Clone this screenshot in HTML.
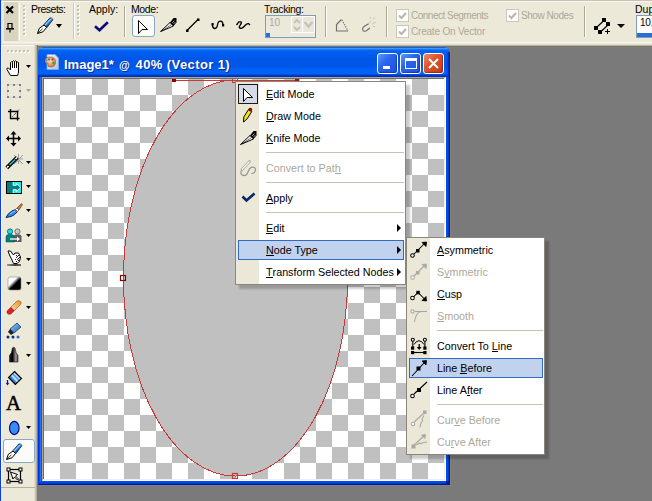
<!DOCTYPE html>
<html><head><meta charset="utf-8">
<style>
*{box-sizing:border-box;margin:0;padding:0}
html,body{width:652px;height:501px;overflow:hidden;background:#7a7a7a;font-family:"Liberation Sans",sans-serif;}
.a{position:absolute}
#tb{left:0;top:0;width:652px;height:47px;background:#ece9d8}
.lbl{position:absolute;font-size:10px;line-height:12px;color:#000;white-space:nowrap}
.sep{position:absolute;top:6px;width:2px;height:32px;border-left:1px solid #aca899;border-right:1px solid #fff}
.grip{position:absolute;width:3px;background-image:radial-gradient(circle at 1px 1px,#c6c2b2 1px,transparent 1px),radial-gradient(circle at 2px 2px,#fff 1px,transparent 1px);background-size:3px 4px}
.cb{position:absolute;width:13px;height:13px;border:1px solid #cac8bb;background:#fff}
.dis{color:#aca899}
#lt{left:0;top:45px;width:38px;height:456px;background:#ece9d8}
.dd{position:absolute;width:0;height:0;border-left:3px solid transparent;border-right:3px solid transparent;border-top:3px solid #000}
#win{left:38px;top:47px;width:412px;height:438px;}
#canvas{left:44px;top:79px;width:400px;height:400px;background:repeating-conic-gradient(#c0c0c0 0 25%,#fff 0 50%) 0 0/32px 32px;overflow:hidden}
.menu{position:absolute;background:#fff;border:1px solid #8a867a;box-shadow:4px 4px 2px rgba(0,0,0,0.2)}
.gut{position:absolute;left:0;top:0;width:23px;bottom:0;background:#ebe8d8}
.mi{position:absolute;left:0;right:0;height:22px;font-size:10.75px;line-height:22px;white-space:nowrap}
.mi .t{position:absolute;left:30px;top:0}
.msep{position:absolute;height:1px;background:#c5c2b2}
u{text-decoration:none;border-bottom:1px solid currentColor;line-height:9px;display:inline-block}
.arr{position:absolute;width:0;height:0;border-top:4px solid transparent;border-bottom:4px solid transparent;border-left:4px solid #000}
.hl{position:absolute;background:#c1d2ee;border:1px solid #316ac5}
.tbtn{width:21px;height:21px;border:1px solid #fff;border-radius:3px;background:linear-gradient(135deg,#5a9af8 0%,#2a66ec 40%,#1c50df 100%);box-shadow:inset -1px -1px 1px rgba(0,20,120,0.4)}
.cls{background:linear-gradient(135deg,#f08a6a 0%,#e0542c 40%,#c63d0e 100%)}
</style></head><body>

<!-- top toolbar -->
<div id="tb" class="a">
  <div class="a" style="left:0;top:0;width:652px;height:1px;background:#c6c3b4"></div>
  <div class="a" style="left:0;top:1px;width:652px;height:1px;background:#f9f8f0"></div>
  <div class="a" style="left:0;top:42px;width:652px;height:1px;background:#f7f6f0"></div>
  <div class="a" style="left:0;top:43px;width:652px;height:1px;background:#ebe8d9"></div>
  <div class="a" style="left:0;top:44px;width:652px;height:1px;background:#e2dfcc"></div>
  <div class="a" style="left:0;top:45px;width:652px;height:1px;background:#b8b4a2"></div>
  <div class="a" style="left:0;top:46px;width:652px;height:1px;background:#7a7560"></div>
  <!-- close/pin panel -->
  <div class="a" style="left:4px;top:2px;width:14px;height:39px;background:#d9d4bf"></div>
  <svg class="a" style="left:4px;top:4px" width="12" height="30" viewBox="4 4 12 30">
    <path d="M6.5 6.5 L13 13 M13 6.5 L6.5 13" stroke="#000" stroke-width="2.2"/>
    <path d="M7.5 23.5 H12.5 M8 23 V28.5 M12 23 V28.5" stroke="#000" stroke-width="1.2" fill="none"/>
    <path d="M6 28.8 H14" stroke="#000" stroke-width="1.6"/>
    <path d="M10 29.5 V32.5" stroke="#000" stroke-width="1.2"/>
  </svg>
  <div class="a" style="left:19px;top:3px;width:1px;height:37px;background:#fff"></div>
  <div class="grip" style="left:23px;top:5px;height:32px"></div>
  <div class="lbl" style="left:31px;top:3px;font-size:10.5px;letter-spacing:-0.5px">Presets:</div>
  <svg class="a" style="left:34px;top:15px" width="22" height="21" viewBox="34 15 22 21">
    <defs><linearGradient id="pb" gradientUnits="userSpaceOnUse" x1="47" y1="21" x2="50" y2="24"><stop offset="0" stop-color="#1a4a90"/><stop offset="0.3" stop-color="#9ad4ff"/><stop offset="0.55" stop-color="#3a8ae0"/><stop offset="1" stop-color="#0e2a6a"/></linearGradient></defs>
    <path d="M43.8 24.7 L49.8 18 Q51.5 17.3 53 19.5 L46.8 27.7 Z" fill="url(#pb)" stroke="#0a2a5a" stroke-width="0.8"/>
    <path d="M44 25 L46.5 27.5 L43 31.8 L37.5 33.5 L39.3 28.3 Z" fill="#fff" stroke="#000" stroke-width="1"/>
    <path d="M37.8 33.2 L42.5 28.8" stroke="#000" stroke-width="0.8"/>
  </svg>
  <div class="dd" style="left:56px;top:24px;border-width:4px 3px 0 3px"></div>
  <div class="a" style="left:73px;top:3px;width:1px;height:36px;background:#c9c6b6"></div>
  <div class="a" style="left:74px;top:3px;width:1px;height:36px;background:#fff"></div>
  <div class="grip" style="left:77px;top:5px;height:32px"></div>
  <div class="lbl" style="left:89px;top:3px;font-size:10.5px">Apply:</div>
  <svg class="a" style="left:90px;top:16px" width="22" height="18" viewBox="90 16 22 18">
    <path d="M95 26.3 L99.5 30.3 L107.8 22.2" fill="none" stroke="#0c0c78" stroke-width="2.6" stroke-linejoin="miter"/>
  </svg>
  <div class="a" style="left:124px;top:6px;width:1px;height:31px;background:#aca899"></div>
  <div class="a" style="left:125px;top:6px;width:1px;height:31px;background:#fff"></div>
  <div class="lbl" style="left:131px;top:3px;font-size:10.5px;letter-spacing:-0.4px">Mode:</div>
  <div class="a" style="left:132px;top:15px;width:23px;height:22px;border:1px solid #8ba7c6;border-radius:3px;background:#fbfbf8"></div>
  <svg class="a" style="left:137px;top:19px" width="13" height="15" viewBox="0 0 13 15">
    <path d="M1.5 1.5 V14.5 L5 10.5 H10.5 Z" fill="#fff" stroke="#000" stroke-width="1"/>
  </svg>
  <svg class="a" style="left:156px;top:14px" width="24" height="22" viewBox="156 14 24 22">
    <path d="M160.5 31.5 L170 22.5 L173.5 26 Z" fill="#fff" stroke="#000" stroke-width="1"/>
    <path d="M162 31 L171.5 24.5" stroke="#000" stroke-width="0.6"/>
    <path d="M170 22.5 L173.5 18 L176.5 18 L176.5 22.5 L173.5 26 Z" fill="#000"/>
    <path d="M172 23 L174.5 20.5 M173.5 24 L175.5 22" stroke="#ddd" stroke-width="0.7"/>
  </svg>
  <svg class="a" style="left:185px;top:18px" width="15" height="14" viewBox="0 0 15 14">
    <path d="M2 12.5 L13 1.5" stroke="#000" stroke-width="1.2"/>
    <rect x="1" y="11.5" width="2.5" height="2.5" fill="#000"/><rect x="12" y="0.5" width="2.5" height="2.5" fill="#000"/>
  </svg>
  <svg class="a" style="left:206px;top:16px" width="48" height="18" viewBox="206 16 48 18">
    <path d="M212.5 24.5 V26 Q213 28.5 215 28.5 Q217 28.5 217.5 25 Q218 21.2 220.5 21.2 Q222.8 21.2 223 24.5" fill="none" stroke="#000" stroke-width="1.3"/>
    <rect x="211.5" y="23" width="2.2" height="2.5" fill="#000"/><rect x="222" y="24" width="2.2" height="2.5" fill="#000"/>
    <path d="M236.5 25 L238.8 21.8 H241 Q242 22.5 240.5 24.5 L239.2 27 Q239.5 28.5 241.5 28.3 Q243 28 245 25.5 Q247 23.2 248.5 23.6 L250 25" fill="none" stroke="#000" stroke-width="1.3"/>
  </svg>
  <div class="lbl" style="left:264px;top:3px;font-size:10.5px;letter-spacing:-0.35px">Tracking:</div>
  <div class="a" style="left:265px;top:15px;width:51px;height:23px;border:1px solid #7f9db9;background:#ebe9dc"></div>
  <div class="lbl dis" style="left:269px;top:17px;font-size:10px;line-height:12px">10</div>
  <div class="a" style="left:291px;top:16px;width:24px;height:17px;background:#fff"></div>
  <div class="a" style="left:292px;top:17px;width:10px;height:15px;background:#e9e7dc"></div>
  <div class="a" style="left:303px;top:17px;width:11px;height:15px;background:#e9e7dc"></div>
  <svg class="a" style="left:292px;top:17px" width="23" height="15" viewBox="0 0 23 15">
    <path d="M2 6 L5 3 L8 6" fill="none" stroke="#c4c2b4" stroke-width="1.8"/>
    <path d="M2 10 L5 13 L8 10" fill="none" stroke="#c4c2b4" stroke-width="1.8"/>
    <path d="M12.5 5 L16.5 9.5 L20.5 5" fill="none" stroke="#c4c2b4" stroke-width="2.2"/>
  </svg>
  <div class="a" style="left:266px;top:33px;width:4px;height:4px;background:#2a6fd6"></div>
  <div class="a" style="left:325px;top:6px;width:1px;height:31px;background:#aca899"></div>
  <div class="a" style="left:326px;top:6px;width:1px;height:31px;background:#fff"></div>
  <svg class="a" style="left:330px;top:14px" width="50" height="22" viewBox="330 14 50 22">
    <path d="M341.5 19.5 L336.5 24.5 V31 H348" fill="none" stroke="#707070" stroke-width="1.2"/>
    <path d="M342 20 L348 31" fill="none" stroke="#707070" stroke-width="1.2" stroke-dasharray="1.2 1.2"/>
    <path d="M368.7 23.8 L364 26.5 Q362 28 362.7 30 Q363.8 31.8 366 31 L370 28" fill="none" stroke="#707070" stroke-width="1.2"/>
    <path d="M369 23 L371.5 21 M372 24 L376 22 M370 19 L371 17 M373 19 L375 17.5 M372.5 26 L375 27" stroke="#c8c6ba" stroke-width="1"/>
  </svg>
  <div class="a" style="left:386px;top:6px;width:1px;height:31px;background:#aca899"></div>
  <div class="a" style="left:387px;top:6px;width:1px;height:31px;background:#fff"></div>
  <div class="cb" style="left:396px;top:9px"></div>
  <svg class="a" style="left:398px;top:12px" width="9" height="8" viewBox="0 0 9 8"><path d="M1 3.5 L3.5 6 L8 1" fill="none" stroke="#b7b5a8" stroke-width="2"/></svg>
  <div class="lbl dis" style="left:411px;top:10px;letter-spacing:-0.5px">Connect Segments</div>
  <div class="cb" style="left:396px;top:25px"></div>
  <svg class="a" style="left:398px;top:28px" width="9" height="8" viewBox="0 0 9 8"><path d="M1 3.5 L3.5 6 L8 1" fill="none" stroke="#b7b5a8" stroke-width="2"/></svg>
  <div class="lbl dis" style="left:411px;top:26px;letter-spacing:-0.2px">Create On Vector</div>
  <div class="cb" style="left:506px;top:9px"></div>
  <svg class="a" style="left:508px;top:12px" width="9" height="8" viewBox="0 0 9 8"><path d="M1 3.5 L3.5 6 L8 1" fill="none" stroke="#b7b5a8" stroke-width="2"/></svg>
  <div class="lbl dis" style="left:521px;top:10px;letter-spacing:-0.45px">Show Nodes</div>
  <div class="a" style="left:584px;top:6px;width:1px;height:31px;background:#aca899"></div>
  <div class="a" style="left:585px;top:6px;width:1px;height:31px;background:#fff"></div>
  <svg class="a" style="left:592px;top:16px" width="20" height="20" viewBox="592 16 20 20">
    <path d="M597 27 L604 20.5 M601 31.5 L608 25" stroke="#000" stroke-width="1.1"/>
    <rect x="594" y="26" width="4" height="4" fill="#000"/><rect x="602" y="18" width="4" height="4" fill="#000"/>
    <rect x="606" y="22" width="4" height="4" fill="#000"/><rect x="598" y="30" width="4" height="4" fill="#000"/>
    <path d="M607.5 29 V34 M605 31.5 H610" stroke="#000" stroke-width="1"/>
  </svg>
  <div class="dd" style="left:617px;top:24px;border-width:4px 4px 0 4px"></div>
  <div class="lbl" style="left:635px;top:3px;font-size:10.5px">Dup</div>
  <div class="a" style="left:636px;top:15px;width:20px;height:23px;border:1px solid #7f9db9;background:#fff"></div>
  <div class="lbl" style="left:640px;top:17px;font-size:10px;letter-spacing:-0.2px">10.</div>
  <div class="a" style="left:637px;top:33px;width:20px;height:4px;background:#2a6fd6"></div>
</div>

<!-- left toolbar -->
<div id="lt" class="a">
  <div class="a" style="left:0;top:0;width:34px;height:1px;background:#fbfaf2"></div>
  <div class="a" style="left:1px;top:0;width:1px;height:442px;background:#fbfaf2"></div>
  <div class="a" style="left:34px;top:0;width:1px;height:456px;background:#dfdcc9"></div>
  <div class="a" style="left:35px;top:0;width:1px;height:456px;background:#c8c5b5"></div>
  <div class="a" style="left:36px;top:0;width:1px;height:456px;background:#b0ad9c"></div>
  <div class="a" style="left:37px;top:0;width:1px;height:456px;background:#7e7a65"></div>
  <div class="a" style="left:0;top:442px;width:35px;height:1px;background:#b5b2a2"></div>
  <div class="grip" style="left:7px;top:5px;width:24px;height:3px;background-size:4px 3px"></div>
  <svg class="a" style="left:0;top:0" width="36" height="441" viewBox="0 45 36 441">
    <!-- hand -->
    <path d="M10.5 75.5 L7 69.5 Q6.5 67.5 8.5 68 L10.5 70 V62.5 Q11.5 61 12.5 62.5 V61.5 Q13.5 60 14.5 61.5 V61.5 Q15.5 60 16.5 61.5 V62.5 Q17.5 61.5 18.5 62.5 V71 Q18.5 73.5 17.5 75.5 Z" fill="#fff" stroke="#000" stroke-width="1"/>
    <path d="M12.5 62.5 V68 M14.5 61.5 V68 M16.5 61.5 V68" stroke="#000" stroke-width="1"/>
    <path d="M26 65 h5 l-2.5 3z" fill="#000"/>
    <!-- selection -->
    <rect x="7.5" y="84.5" width="13" height="13" fill="none" stroke="#c0c0cc" stroke-width="1" stroke-dasharray="1 1"/>
    <g fill="#808080"><rect x="7" y="84" width="2" height="2"/><rect x="13" y="84" width="2" height="2"/><rect x="19" y="84" width="2" height="2"/>
    <rect x="7" y="90" width="2" height="2"/><rect x="19" y="90" width="2" height="2"/>
    <rect x="7" y="96" width="2" height="2"/><rect x="13" y="96" width="2" height="2"/><rect x="19" y="96" width="2" height="2"/></g>
    <path d="M26 89 h5 l-2.5 3z" fill="#aca899"/>
    <!-- crop -->
    <path d="M8 111.5 H18.5 M10.5 109 V119 M17.5 111 V120.5 M10 118.5 H19.5" fill="none" stroke="#000" stroke-width="1.4"/>
    <path d="M12.5 116.5 L16 113 M18 110.5 L19.5 109" stroke="#000" stroke-width="1" stroke-dasharray="1 1"/>
    <!-- move -->
    <path d="M13.5 133 v12 M8 138.5 h11" stroke="#000" stroke-width="1.5"/>
    <path d="M13.5 131 l-3 3.5 h6z M13.5 146.5 l-3 -3.5 h6z M6 138.5 l3 -3 v6z M21 138.5 l-3 -3 v6z" fill="#000"/>
    <!-- magic wand -->
    <path d="M14 155 L23 164 M23 155 L14 164 M18.5 154 V164 M13.5 159 H23" stroke="#a0a0a0" stroke-width="1"/>
    <path d="M15.5 157.5 L21.5 163.5 M21.5 157.5 L15.5 163.5" stroke="#c8c8c8" stroke-width="1"/>
    <path d="M6.8 167.8 L17.2 157.4" stroke="#000" stroke-width="4"/>
    <path d="M9.5 165 L15 159.5" stroke="#19d8e8" stroke-width="1.2"/>
    <path d="M7 167.5 L8.6 166 M15.5 159 L17 157.5" stroke="#fff" stroke-width="1.6"/>
    <path d="M26 161 h5 l-2.5 3z" fill="#000"/>
    <!-- teal box -->
    <rect x="6.5" y="181.5" width="15" height="12" fill="#10f4f8" stroke="#000" stroke-width="1"/>
    <path d="M7 182 H13 V185.3 H16.3 V183.3 L20.6 187.5 L16.3 191.7 V189.7 H13 V193 H7 Z" fill="#008080"/>
    <path d="M13.2 182 V185.3 H16.3 V183.3 L20.6 187.5 L16.3 191.7 V189.7 H13.2 V193" fill="none" stroke="#fff" stroke-width="0.9"/>
    <path d="M26 185 h5 l-2.5 3z" fill="#000"/>
    <!-- brush -->
    <path d="M6 217.5 Q8 213 12 211 L15.5 209.5 L17.5 211.5 Q15 215 11 216.5 Z" fill="#2a8ae8" stroke="#0a2870" stroke-width="1"/>
    <path d="M10 214 Q12 212.5 15 211" stroke="#9ad8ff" stroke-width="1"/>
    <path d="M15.5 209.5 L17 208 L19 210 L17.5 211.5 Z" fill="#fff" stroke="#333" stroke-width="0.6"/>
    <path d="M17 208 L21.5 203.5 L22.5 204.5 L19 210 Z" fill="#c87a2a" stroke="#5a3010" stroke-width="0.6"/>
    <path d="M26 209 h5 l-2.5 3z" fill="#000"/>
    <!-- clone people -->
    <circle cx="17.5" cy="231.5" r="2.6" fill="#c8c8c8" stroke="#555" stroke-width="0.8"/>
    <path d="M13.5 242 v-5 q0-2.5 2.5-2.5 h3 q2.5 0 2.5 2.5 v5z" fill="#5a5a5a"/>
    <circle cx="10" cy="231.5" r="2.6" fill="#10e0f0" stroke="#055" stroke-width="0.8"/>
    <path d="M6 242 v-5 q0-2.5 2.5-2.5 h3 q2.5 0 2.5 2.5 v5z" fill="#008080" stroke="#044" stroke-width="0.5"/>
    <path d="M10 239 h8.5" stroke="#fff" stroke-width="1.3"/><path d="M17 236.5 l3 2.5 l-3 2.5z" fill="#fff"/>
    <path d="M26 234 h5 l-2.5 3z" fill="#000"/>
    <!-- retouch hand -->
    <defs><linearGradient id="sh" x1="0" y1="0" x2="1" y2="0"><stop offset="0" stop-color="#9a9a9a"/><stop offset="0.6" stop-color="#404040"/><stop offset="1" stop-color="#6a6a6a"/></linearGradient></defs>
    <rect x="7" y="264" width="14" height="2" fill="url(#sh)"/>
    <path d="M8 251 L10.5 251 L13.5 255 L15 253 L18.5 253 L20.5 257 L19.5 261.5 L17 263.5 L13.5 263.5 L11.5 259 L9.5 255 Z" fill="#fff" stroke="#000" stroke-width="1"/>
    <g fill="#222"><rect x="16" y="255" width="1" height="1"/><rect x="18" y="255" width="1" height="1"/><rect x="17" y="256" width="1" height="1"/><rect x="19" y="257" width="1" height="1"/><rect x="16" y="257" width="1" height="1"/><rect x="18" y="258" width="1" height="1"/><rect x="17" y="259" width="1" height="1"/><rect x="15" y="259" width="1" height="1"/><rect x="18" y="260" width="1" height="1"/><rect x="16" y="261" width="1" height="1"/></g>
    <path d="M26 258 h5 l-2.5 3z" fill="#000"/>
    <defs><linearGradient id="dg" x1="0" y1="0" x2="1" y2="1"><stop offset="0.35" stop-color="#fff"/><stop offset="0.55" stop-color="#000"/></linearGradient>
    <linearGradient id="er" x1="0" y1="1" x2="1" y2="0"><stop offset="0.4" stop-color="#d8202a"/><stop offset="0.42" stop-color="#f3d08a"/><stop offset="1" stop-color="#f09020"/></linearGradient>
    <linearGradient id="mk" x1="0" y1="0" x2="1" y2="0"><stop offset="0" stop-color="#222"/><stop offset="0.35" stop-color="#000"/><stop offset="0.75" stop-color="#9a9a9a"/><stop offset="1" stop-color="#444"/></linearGradient>
    <linearGradient id="bk" x1="0" y1="0" x2="1" y2="1"><stop offset="0" stop-color="#9fd0f5"/><stop offset="1" stop-color="#1a5cb0"/></linearGradient>
    <linearGradient id="pn" x1="0" y1="0" x2="1" y2="0"><stop offset="0" stop-color="#1b4f9a"/><stop offset="0.5" stop-color="#6ab8f0"/><stop offset="1" stop-color="#1b4f9a"/></linearGradient></defs>
    <!-- dodge -->
    <rect x="8" y="277" width="13" height="13" rx="2" fill="url(#dg)" stroke="#888" stroke-width="0.6"/>
    <path d="M26 282 h5 l-2.5 3z" fill="#000"/>
    <!-- eraser -->
    <path d="M7 311 L17 301 Q19 300 21 302 L21 304 L11 314 Q8 315 7 313 Z" fill="url(#er)" stroke="#a04020" stroke-width="0.6"/>
    <path d="M26 306 h5 l-2.5 3z" fill="#000"/>
    <!-- blue marker dots -->
    <path d="M10 329 L17 323 L21 327 L14 333 Z" fill="url(#bk)" stroke="#143d7a" stroke-width="0.8"/>
    <path d="M10 329 L14 333 L11 335 L8 332 Z" fill="#222"/>
    <circle cx="8" cy="337" r="1.5" fill="#0a2a7a"/><circle cx="13" cy="337" r="1.5" fill="#0a2a7a"/><circle cx="18" cy="337" r="1.5" fill="#2a6ad0"/>
    <!-- black marker -->
    <path d="M9.5 362 V355.5 L11.5 352.5 L12.5 348 Q13.7 346.5 15 348 L16 352.5 L18 355.5 V362 Z" fill="url(#mk)" stroke="#111" stroke-width="0.6"/>
    <path d="M26 354 h5 l-2.5 3z" fill="#000"/>
    <!-- bucket -->
    <defs><linearGradient id="bk2" gradientUnits="userSpaceOnUse" x1="11" y1="381" x2="18.5" y2="374"><stop offset="0" stop-color="#0a3a8a"/><stop offset="0.3" stop-color="#4a9ae8"/><stop offset="0.45" stop-color="#e8f6ff"/><stop offset="0.6" stop-color="#3a8ae0"/><stop offset="0.75" stop-color="#bfe4ff"/><stop offset="1" stop-color="#0a3a8a"/></linearGradient></defs>
    <path d="M14.5 371.5 L21.5 378.5 L15.3 384.5 L8.5 377.5 Z" fill="url(#bk2)" stroke="#000" stroke-width="1.1"/>
    <path d="M7.5 380 V384" stroke="#1010a0" stroke-width="1.3"/><path d="M5.8 383 h3.4 l-1.7 2.5z" fill="#1010a0"/>
    <!-- A -->
    <text x="6" y="409.6" font-family="Liberation Serif" font-size="20.5" fill="#000" stroke="#000" stroke-width="0.5" textLength="15" lengthAdjust="spacingAndGlyphs">A</text>
    <!-- ellipse -->
    <ellipse cx="14.3" cy="428" rx="4.8" ry="6.6" fill="#3a8df0" stroke="#00007a" stroke-width="1.1"/>
    <path d="M26 426 h5 l-2.5 3z" fill="#000"/>
  </svg>
  <div class="a" style="left:3px;top:394px;width:32px;height:24px;border:1px solid #8ba7c6;border-radius:3px;background:#fbfbf8"></div>
  <svg class="a" style="left:0;top:394px" width="36" height="47" viewBox="0 439 36 47">
    <g transform="translate(-31 426)"><defs><linearGradient id="pb2" gradientUnits="userSpaceOnUse" x1="47" y1="21" x2="50" y2="24"><stop offset="0" stop-color="#1a4a90"/><stop offset="0.3" stop-color="#9ad4ff"/><stop offset="0.55" stop-color="#3a8ae0"/><stop offset="1" stop-color="#0e2a6a"/></linearGradient></defs>
    <path d="M43.8 24.7 L49.8 18 Q51.5 17.3 53 19.5 L46.8 27.7 Z" fill="url(#pb2)" stroke="#0a2a5a" stroke-width="0.8"/>
    <path d="M44 25 L46.5 27.5 L43 31.8 L37.5 33.5 L39.3 28.3 Z" fill="#fff" stroke="#000" stroke-width="1"/>
    <path d="M37.8 33.2 L42.5 28.8" stroke="#000" stroke-width="0.8"/></g>
    <!-- object selector -->
    <rect x="8.5" y="469.5" width="12" height="12" fill="none" stroke="#000" stroke-width="1.2"/>
    <g fill="#fff" stroke="#000" stroke-width="1"><rect x="7" y="468" width="3" height="3"/><rect x="19" y="468" width="3" height="3"/>
    <rect x="7" y="480" width="3" height="3"/><rect x="19" y="480" width="3" height="3"/></g>
    <path d="M10.5 472 L17.5 474.5 L15.5 476 L18.5 479 L17.5 480 L14.5 477 L13 479 Z" fill="#fff" stroke="#000" stroke-width="1"/>
  </svg>
</div>

<div class="a" style="left:0;top:0;width:1px;height:501px;background:#0a3ce0"></div>

<!-- document window -->
<div id="win" class="a">
  <div class="a" style="left:0;top:0;width:412px;height:30px;border-radius:6px 6px 0 0;background:linear-gradient(#0a64f5 0,#0a64f5 1px,#3c96ff 1px,#3c96ff 2px,#1a78ff 2px,#1a78ff 3px,#0a66f5 3px,#0060f0 5px,#0056e6 12px,#0056e6 19px,#0062f5 23px,#0064f5 27px,#0050e0 27px,#0050e0 28px,#0038d0 28px,#0038d0 29px,#0030c0 29px)"></div>
  <div class="a" style="left:0;top:30px;width:4px;height:408px;background:linear-gradient(90deg,#0030e0 0,#0030e0 1px,#0848e8 1px,#0848e8 2px,#2070f8 2px,#2070f8 3px,#0858e8 3px)"></div>
  <div class="a" style="left:408px;top:5px;width:4px;height:25px;background:linear-gradient(90deg,rgba(0,80,240,0) 0,rgba(0,70,230,0.3) 1px,rgba(0,50,190,0.7) 2px,#0020a8 3px)"></div>
  <div class="a" style="left:408px;top:30px;width:4px;height:408px;background:linear-gradient(90deg,#0050f0 0,#0050f0 1px,#0048e8 1px,#0048e8 2px,#0038c8 2px,#0038c8 3px,#0018a0 3px)"></div>
  <div class="a" style="left:0;top:434px;width:412px;height:4px;background:linear-gradient(#0050f0 0,#0050f0 1px,#0048e8 1px,#0048e8 2px,#0038c8 2px,#0038c8 3px,#0018a0 3px)"></div>
  <div class="a" style="left:408px;top:434px;width:4px;height:4px;background:#0018a0"></div>
  <div class="a" style="left:4px;top:30px;width:404px;height:404px;background:#fff;border-top:1px solid #aca68e;border-left:1px solid #aca68e;border-right:1px solid #fff;border-bottom:1px solid #fff"></div>
  <div class="a" style="left:5px;top:31px;width:1px;height:401px;background:#716f64"></div>
  <div class="a" style="left:5px;top:31px;width:401px;height:1px;background:#716f64"></div>
  <div class="a" style="left:406px;top:31px;width:1px;height:401px;background:#f0efe6"></div>
  <div class="a" style="left:5px;top:432px;width:402px;height:1px;background:#f0efe6"></div>
</div>
<div class="a" style="left:450px;top:49px;width:1px;height:437px;background:#84816e"></div>
<div class="a" style="left:38px;top:485px;width:413px;height:1px;background:#84816e"></div>
<div id="canvas" class="a"></div>

<!-- title contents -->
<svg class="a" style="left:43px;top:53px" width="18" height="18" viewBox="0 0 18 18">
  <defs><linearGradient id="pg" x1="0" y1="0" x2="1" y2="1"><stop offset="0" stop-color="#f4f8ff"/><stop offset="1" stop-color="#a9c2ea"/></linearGradient>
  <radialGradient id="pal" cx="0.45" cy="0.4" r="0.6"><stop offset="0" stop-color="#f8e0b0"/><stop offset="1" stop-color="#d07a3a"/></radialGradient></defs>
  <path d="M4 1.5 h8 l3.5 3.5 v11.5 h-11.5z" fill="url(#pg)" stroke="#8aa6d8" stroke-width="0.8"/>
  <path d="M2 8 Q2 4 7 4 Q12.5 4 12.5 9 Q12.5 14 7.5 14 Q4 14 5 11 Q5.5 9.5 4 10 Q2 11 2 8z" fill="url(#pal)" stroke="#9a5020" stroke-width="0.6"/>
  <circle cx="6" cy="6.5" r="1.1" fill="#3a6ad0"/><circle cx="9.5" cy="6.5" r="1.1" fill="#d83020"/><circle cx="10.5" cy="10" r="1.2" fill="#2aa040"/><circle cx="3.5" cy="7.5" r="0.9" fill="#4a8ae0"/>
</svg>
<div class="a" style="left:64px;top:57px;font-size:13px;line-height:16px;font-weight:bold;color:#fff;white-space:nowrap;text-shadow:1px 1px 0 #0a2a9a">Image1*<span style="font-size:11px;margin-left:5px;font-weight:bold">@</span><span style="margin-left:6px;letter-spacing:0.4px">40% (Vector 1)</span></div>
<div class="a tbtn" style="left:377px;top:53px"><div class="a" style="left:5px;top:12px;width:7px;height:3px;background:#fff"></div></div>
<div class="a tbtn" style="left:400px;top:53px"><div class="a" style="left:4px;top:4px;width:12px;height:11px;border:1px solid #fff;border-top-width:3px"></div></div>
<div class="a tbtn cls" style="left:423px;top:53px"><svg class="a" style="left:4px;top:4px" width="11" height="11"><path d="M1 1 L10 10 M10 1 L1 10" stroke="#fff" stroke-width="2"/></svg></div>

<!-- ellipse -->
<svg class="a" style="left:44px;top:79px" width="400" height="400" viewBox="44 79 400 400">
  <ellipse cx="235.5" cy="278" rx="112" ry="198" fill="#c0c0c0" stroke="#c83a3a" stroke-width="1" shape-rendering="crispEdges"/>
  <path d="M176 80.5 H232 M238 80.5 H295" stroke="#c53a3a" stroke-width="1"/>
  <rect x="172" y="79" width="4" height="3" fill="#8b0000"/>
  <rect x="295" y="79" width="4" height="3" fill="#a01010"/>
  <rect x="232.5" y="77.5" width="5" height="5" fill="none" stroke="#c53a3a" stroke-width="1"/>
  <rect x="120.5" y="275.5" width="5" height="5" fill="none" stroke="#8b0000" stroke-width="1.2"/>
  <rect x="232.5" y="473.5" width="5" height="5" fill="none" stroke="#c53a3a" stroke-width="1.2"/>
</svg>

<!-- context menu -->
<div class="menu" style="left:235px;top:81px;width:171px;height:204px">
  <div class="gut" style="width:23px"></div>
  <div class="a" style="left:2px;top:2px;width:20px;height:20px;border:1px solid #1c1c1c;background:#d4dae8"></div>
  <svg class="a" style="left:0;top:0" width="24" height="202" viewBox="236 82 24 202">
    <path d="M243.5 88.5 V101.5 L247 97.5 H252.5 Z" fill="#fff" stroke="#000" stroke-width="1"/>
    <path d="M243.5 122 L243.8 117 L248.5 109.5 L251.8 111.5 L247 119 Z" fill="#f4e41c" stroke="#000" stroke-width="1"/>
    <circle cx="250.3" cy="109.6" r="1.9" fill="#8a0a0a"/>
    <path d="M240.5 144.5 L250 135.5 L253.5 139 Z" fill="#fff" stroke="#000" stroke-width="1"/>
    <path d="M242 144 L251.5 137.5" stroke="#000" stroke-width="0.6"/>
    <path d="M250 135.5 L253.5 131 L256.5 131 L256.5 135.5 L253.5 139 Z" fill="#000"/>
    <path d="M252 136 L254.5 133.5 M253.5 137 L255.5 135" stroke="#ddd" stroke-width="0.7"/>
    <path d="M242 169.5 Q240.5 171.5 241 173.5 Q242 176 245 175.5 Q247 175 248 172 Q249.5 167.5 252.5 167 Q255.5 167 255.5 170 Q255 173.5 251.5 173.5" fill="none" stroke="#8c8c8c" stroke-width="1.1"/>
    <path d="M249.5 161.5 L242 169.5" stroke="#a8a8a8" stroke-width="2.6" stroke-linecap="round"/>
    <path d="M249.5 161.5 L242 169.5" stroke="#fafafa" stroke-width="1.1"/>
    <path d="M242.5 196.5 L246.5 200.5 L254.5 193.5" fill="none" stroke="#0a246a" stroke-width="2.6"/>
  </svg>
  <div class="mi" style="top:1px"><span class="t"><u>E</u>dit Mode</span></div>
  <div class="mi" style="top:23px"><span class="t"><u>D</u>raw Mode</span></div>
  <div class="mi" style="top:45px"><span class="t"><u>K</u>nife Mode</span></div>
  <div class="msep" style="left:30px;width:138px;top:70px"></div>
  <div class="mi dis" style="top:75px"><span class="t">Convert to Pat<u>h</u></span></div>
  <div class="msep" style="left:30px;width:138px;top:100px"></div>
  <div class="mi" style="top:105px"><span class="t"><u>A</u>pply</span></div>
  <div class="msep" style="left:30px;width:138px;top:130px"></div>
  <div class="mi" style="top:135px"><span class="t"><u>E</u>dit</span><div class="arr" style="left:161px;top:7px"></div></div>
  <div class="hl" style="left:2px;top:158px;width:166px;height:20px"></div>
  <div class="mi" style="top:157px"><span class="t"><u>N</u>ode Type</span><div class="arr" style="left:161px;top:7px"></div></div>
  <div class="mi" style="top:179px"><span class="t"><u>T</u>ransform Selected Nodes</span><div class="arr" style="left:161px;top:7px"></div></div>
</div>

<!-- submenu -->
<div class="menu" style="left:406px;top:237px;width:139px;height:218px">
  <div class="gut" style="width:23px"></div>
  <div class="hl" style="left:2px;top:120px;width:134px;height:20px"></div>
  <svg class="a" style="left:0;top:0" width="24" height="216" viewBox="407 238 24 216">
    <defs><marker id="ah" markerWidth="5" markerHeight="5" refX="4" refY="2.5" orient="auto" markerUnits="userSpaceOnUse"><path d="M0 0 L5 2.5 L0 5z" fill="#000"/></marker>
    <marker id="ahg" markerWidth="5" markerHeight="5" refX="4" refY="2.5" orient="auto" markerUnits="userSpaceOnUse"><path d="M0 0 L5 2.5 L0 5z" fill="#a8a8a8"/></marker></defs>
    <g stroke="#000" fill="none" stroke-width="1.05">
      <path d="M413.5 254.5 L424.5 243.5"/><path d="M422 242.5 L426.5 242 L426 246.5 Z" fill="#000" stroke-width="0.8"/>
      <circle cx="412.5" cy="255.5" r="1.8" fill="#fff"/><rect x="416" y="249" width="3.5" height="3.5" fill="#000" stroke="none"/>
    </g>
    <g stroke="#a8a8a8" fill="none" stroke-width="1.1">
      <path d="M413.5 276.5 L424.5 265.5"/><path d="M422 264.5 L426.5 264 L426 268.5 Z" fill="#a8a8a8" stroke-width="0.8"/>
      <circle cx="412.5" cy="277.5" r="1.8" fill="#fff"/><rect x="416" y="271" width="3.5" height="3.5" fill="#a8a8a8" stroke="none"/>
    </g>
    <g stroke="#000" fill="none" stroke-width="1.05">
      <path d="M413.5 297 L418 292.5 L424.5 299"/><path d="M422 300.5 L426.5 301 L426 296.5 Z" fill="#000" stroke-width="0.8"/>
      <circle cx="412.5" cy="298" r="1.8" fill="#fff"/><rect x="416.3" y="290.8" width="3.5" height="3.5" fill="#000" stroke="none"/>
    </g>
    <g stroke="#a8a8a8" fill="none" stroke-width="1.1">
      <circle cx="412.5" cy="311.5" r="1.6" fill="#fff"/><path d="M414.5 311.5 H427"/><path d="M421 311.5 Q416 312 414.5 322"/>
    </g>
    <g stroke="#000" fill="none" stroke-width="1.1">
      <path d="M412.8 341 V347 M424.9 341 V347"/>
      <path d="M414 344.5 Q416 341 419 340.7 Q422 341 424 344.5" stroke-width="1"/>
      <circle cx="412.8" cy="339.7" r="1.5" fill="#fff"/><circle cx="424.9" cy="339.7" r="1.5" fill="#fff"/>
      <rect x="411" y="346.5" width="3.2" height="3.2" fill="#000" stroke="none"/><rect x="423.3" y="346.5" width="3.2" height="3.2" fill="#000" stroke="none"/>
      <path d="M419.2 344 V348" stroke-width="1.3"/><path d="M416.8 347 H421.6 L419.2 350 Z" fill="#000" stroke="none"/>
      <path d="M413 352.5 H425"/><rect x="411" y="351" width="3.2" height="3.2" fill="#000" stroke="none"/><rect x="423.3" y="351" width="3.2" height="3.2" fill="#000" stroke="none"/>
    </g>
    <g stroke="#000" fill="none" stroke-width="1.05">
      <path d="M412 376 L424.5 362.5"/><path d="M422 361 L426.5 360.5 L426 365 Z" fill="#000" stroke-width="0.8"/>
      <rect x="416.5" y="366.5" width="4" height="4" fill="#000" stroke="none"/>
    </g>
    <g stroke="#000" fill="none" stroke-width="1.05">
      <path d="M414 394 L427 382"/><circle cx="412.5" cy="396" r="1.8" fill="#fff"/>
      <rect x="417" y="388" width="4" height="4" fill="#000" stroke="none"/>
    </g>
    <g stroke="#a8a8a8" fill="none" stroke-width="1.1">
      <path d="M414 422 L424 413"/><circle cx="413" cy="424" r="1.7" fill="#fff"/><rect x="423" y="410.5" width="3.5" height="3.5" fill="#a8a8a8" stroke="none"/>
      <path d="M424 415.5 L422 419 L422.5 421 L420.5 424 L420 427.5"/>
    </g>
    <g stroke="#a8a8a8" fill="none" stroke-width="1.1">
      <path d="M414 445 L424 436"/><path d="M421.5 435 L425.5 434.5 L425 438.5 Z" fill="#a8a8a8" stroke-width="0.8"/><rect x="411.5" y="444.5" width="4" height="4" fill="#a8a8a8" stroke="none"/>
      <path d="M416.5 445 L419.5 443 L421 443.8 L423 442.5 L427 442"/>
    </g>
  </svg>
  <div class="mi" style="top:1px"><span class="t"><u>A</u>symmetric</span></div>
  <div class="mi dis" style="top:23px"><span class="t">S<u>y</u>mmetric</span></div>
  <div class="mi" style="top:45px"><span class="t"><u>C</u>usp</span></div>
  <div class="mi dis" style="top:67px"><span class="t"><u>S</u>mooth</span></div>
  <div class="msep" style="left:30px;width:106px;top:92px"></div>
  <div class="mi" style="top:97px"><span class="t">Convert To <u>L</u>ine</span></div>
  <div class="mi" style="top:119px"><span class="t">Line <u>B</u>efore</span></div>
  <div class="mi" style="top:141px"><span class="t">Line A<u>f</u>ter</span></div>
  <div class="msep" style="left:30px;width:106px;top:166px"></div>
  <div class="mi dis" style="top:171px"><span class="t">Cur<u>v</u>e Before</span></div>
  <div class="mi dis" style="top:193px"><span class="t">Cu<u>r</u>ve After</span></div>
</div>

</body></html>
